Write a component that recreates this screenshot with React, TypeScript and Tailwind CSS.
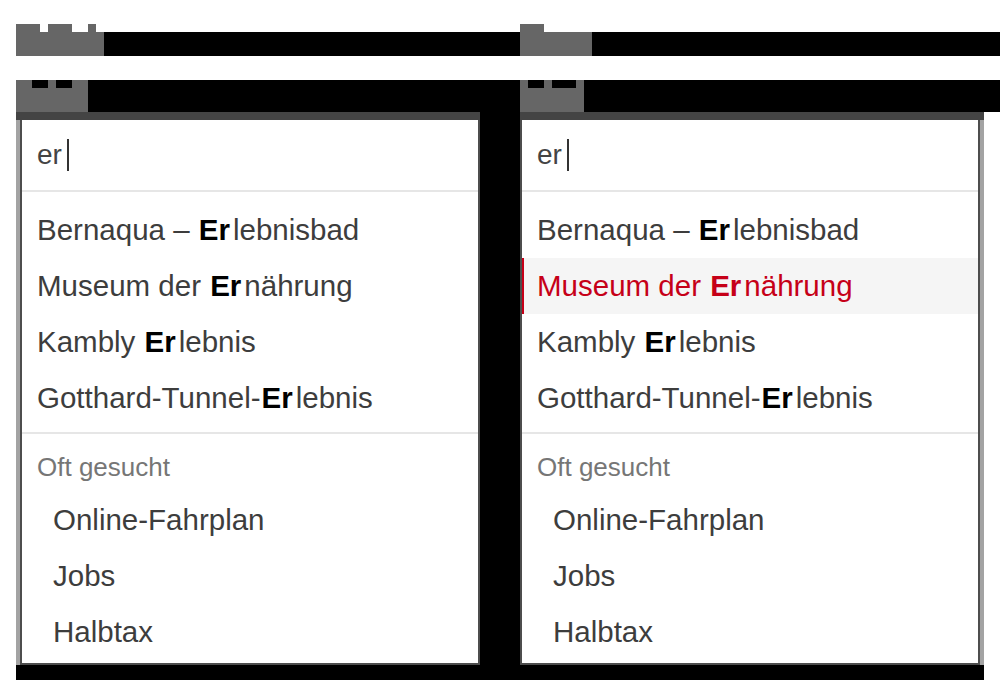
const font = { fontFamily: '"Liberation Sans", Arial, Helvetica, sans-serif' };

const results = [
  { before: "Bernaqua – ", match: "Er", after: "lebnisbad" },
  { before: "Museum der ", match: "Er", after: "nährung" },
  { before: "Kambly ", match: "Er", after: "lebnis" },
  { before: "Gotthard-Tunnel-", match: "Er", after: "lebnis" },
];

const popular = ["Online-Fahrplan", "Jobs", "Halbtax"];

function Suggestions({ active }: { active?: number }) {
  return (
    <div className="flex-1 flex flex-col bg-white border-x-2 border-b-2 border-[#4d4d4d]" style={font}>
      {/* search input */}
      <div className="h-[70px] flex items-center pl-[15px] text-[28px] text-[#444]">
        <span>er</span>
        <span className="ml-[5px] w-[2px] h-[32px] bg-[#333]" />
      </div>
      <div className="h-[2px] bg-[#e6e6e6]" />

      {/* matches */}
      <ul className="pt-[10px] pb-[6px]">
        {results.map((r, i) => {
          const isActive = i === active;
          return (
            <li
              key={r.before}
              className={
                isActive
                  ? "h-[56px] flex items-center pt-[1px] pl-[13px] border-l-2 border-[#c60018] bg-[#f5f5f5] text-[29.5px] text-[#c60018] whitespace-pre"
                  : "h-[56px] flex items-center pt-[1px] pl-[15px] text-[29.5px] text-[#3d3d3d] whitespace-pre"
              }
            >
              {r.before}
              <b className={isActive ? "font-bold text-[#c60018] pl-[1px] pr-[3px]" : "font-bold text-black pl-[1px] pr-[3px]"}>
                {r.match}
              </b>
              {r.after}
            </li>
          );
        })}
      </ul>
      <div className="h-[2px] bg-[#e6e6e6]" />

      {/* frequently searched */}
      <div className="pt-[21px] pb-[13px] pl-[15px] text-[26px] leading-[24px] text-[#767676]">Oft gesucht</div>
      <ul>
        {popular.map((p) => (
          <li key={p} className="h-[56px] flex items-center pt-[1px] pl-[31px] text-[29.5px] text-[#3d3d3d]">
            {p}
          </li>
        ))}
      </ul>
    </div>
  );
}

export default function App() {
  return (
    <div className="w-[1000px] h-[694px] bg-white overflow-hidden pt-[24px]">
      {/* state headings */}
      <div className="flex items-end h-[32px]">
        <div className="w-[16px]" />
        <div className="w-[88px] h-[32px] flex flex-col">
          <div className="h-[8px] flex">
            <div className="w-[24px] bg-[#666]" />
            <div className="w-[8px]" />
            <div className="w-[24px] bg-[#666]" />
            <div className="w-[16px]" />
            <div className="w-[8px] bg-[#666]" />
          </div>
          <div className="flex-1 bg-[#666]" />
        </div>
        <div className="w-[416px] h-[24px] bg-black" />
        <div className="w-[72px] h-[32px] flex flex-col">
          <div className="h-[8px] flex">
            <div className="w-[24px] bg-[#666]" />
          </div>
          <div className="flex-1 bg-[#666]" />
        </div>
        <div className="flex-1 h-[24px] bg-black" />
      </div>

      {/* sub headings */}
      <div className="flex h-[32px] mt-[24px]">
        <div className="w-[16px]" />
        <div className="w-[72px] flex flex-col bg-[#666]">
          <div className="h-[8px] flex">
            <div className="w-[16px]" />
            <div className="w-[16px] bg-black" />
            <div className="w-[8px]" />
            <div className="w-[16px] bg-black" />
          </div>
        </div>
        <div className="w-[432px] bg-black" />
        <div className="w-[64px] flex flex-col bg-[#666]">
          <div className="h-[8px] flex">
            <div className="w-[8px]" />
            <div className="w-[16px] bg-black" />
            <div className="w-[8px]" />
            <div className="w-[24px] bg-black" />
          </div>
        </div>
        <div className="flex-1 bg-black" />
      </div>

      {/* frames */}
      <div className="ml-[16px] w-[968px] h-[568px] bg-black flex gap-[40px]">
        <div className="w-[464px] h-[553px] flex flex-col">
          <div className="h-[8px] bg-[#444]" />
          <div className="flex-1 flex">
            <div className="w-[4px] bg-[#a3a3a3]" />
            <Suggestions />
          </div>
        </div>
        <div className="w-[464px] h-[553px] flex flex-col">
          <div className="h-[8px] bg-[#444]" />
          <div className="flex-1 flex">
            <Suggestions active={1} />
            <div className="w-[4px] bg-[#a3a3a3]" />
          </div>
        </div>
      </div>
    </div>
  );
}
